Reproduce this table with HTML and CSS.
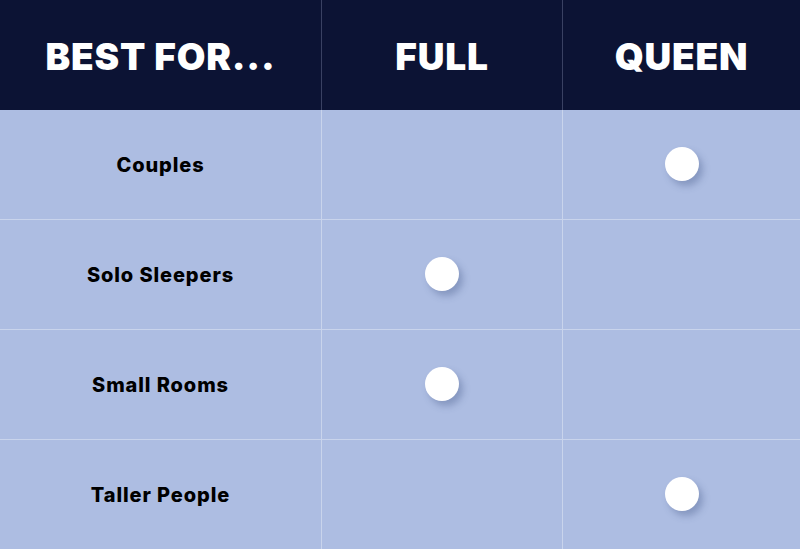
FILE: index.html
```html
<!DOCTYPE html>
<html>
<head>
<meta charset="utf-8">
<link rel="stylesheet" href="styles.css">
</head>
<body>
<div class="table">
  <div class="row head">
    <div class="cell">BEST FOR...</div>
    <div class="cell">FULL</div>
    <div class="cell">QUEEN</div>
  </div>
  <div class="row">
    <div class="cell label">Couples</div>
    <div class="cell"></div>
    <div class="cell"><span class="dot"></span></div>
  </div>
  <div class="row">
    <div class="cell label">Solo Sleepers</div>
    <div class="cell"><span class="dot"></span></div>
    <div class="cell"></div>
  </div>
  <div class="row">
    <div class="cell label">Small Rooms</div>
    <div class="cell"><span class="dot"></span></div>
    <div class="cell"></div>
  </div>
  <div class="row last">
    <div class="cell label">Taller People</div>
    <div class="cell"></div>
    <div class="cell"><span class="dot"></span></div>
  </div>
</div>
</body>
</html>
```
FILE: styles.css
```css
html, body {
  margin: 0;
  padding: 0;
}
body {
  width: 800px;
  height: 549px;
  overflow: hidden;
  background: #adbde2;
  font-family: Inter, "Liberation Sans", sans-serif;
}
.table {
  display: flex;
  flex-direction: column;
}
.row {
  display: grid;
  grid-template-columns: 321px 241px 238px;
  height: 109px;
  border-bottom: 1px solid rgba(255, 255, 255, 0.35);
  background: #adbde2;
}
.row.last {
  border-bottom: none;
}
.row.head {
  height: 110px;
  border-bottom: none;
  background: #0c1334;
}
.cell {
  display: flex;
  align-items: center;
  justify-content: center;
}
.cell + .cell {
  border-left: 1px solid rgba(255, 255, 255, 0.35);
}
.head .cell {
  color: #ffffff;
  font-size: 37px;
  font-weight: 900;
  letter-spacing: 0.8px;
  padding-top: 2px;
}
.head .cell + .cell {
  border-left: 1px solid #3a4162;
}
.label {
  color: #000000;
  font-size: 20px;
  font-weight: 800;
  letter-spacing: 0.9px;
}
.dot {
  width: 34px;
  height: 34px;
  border-radius: 50%;
  background: #ffffff;
  box-shadow: 4px 5px 7px rgba(60, 80, 130, 0.35);
  margin-top: -1px;
}
```
